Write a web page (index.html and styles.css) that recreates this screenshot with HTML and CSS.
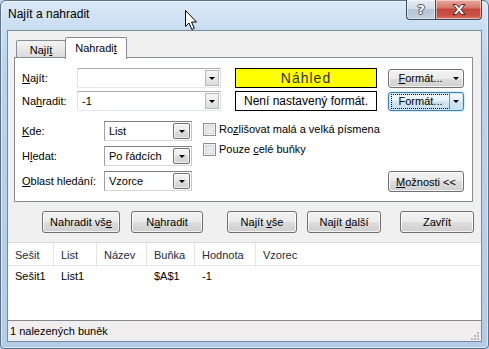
FILE: index.html
```html
<!DOCTYPE html>
<html lang="cs">
<head>
    <meta charset="UTF-8">
    <title>Najít a nahradit</title>

    <link rel="stylesheet" href="styles.css">

</head>
<body>
    <div class="window">
        <!--titulek okna-->
        <div class="titlebar">
            <div class="title">Najít a nahradit</div>
            <div class="caption">
                <span class="cap-btn help">?</span>
                <span class="cap-btn close">
                    <svg width="14" height="11" viewBox="0 0 14 11">
                        <path d="M1 0.5 H4.5 L7 3.5 L9.5 0.5 H13 L9 5.5 L13 10.5 H9.5 L7 7.5 L4.5 10.5 H1 L5 5.5 Z" fill="#fff" stroke="#4a2420" stroke-width="1"/>
                    </svg>
                </span>
            </div>
        </div>

        <div class="client">
            <div class="tabs">
                <span class="tab">Nají<u>t</u></span>
                <span class="tab active">Nahradi<u>t</u></span>
            </div>

            <div class="pane">
                <div class="row">
                    <span class="lbl"><u>N</u>ajít:</span>
                    <div class="combo edit"><span class="val"></span><span class="drop"><i class="tri"></i></span></div>
                    <div class="preview yellow">Náhled</div>
                    <div class="btn split"><span class="face"><u>F</u>ormát...</span><i class="tri"></i></div>
                </div>
                <div class="row second">
                    <span class="lbl">Na<u>h</u>radit:</span>
                    <div class="combo edit"><span class="val">-1</span><span class="drop"><i class="tri"></i></span></div>
                    <div class="preview">Není nastavený formát.</div>
                    <div class="btn split focus"><span class="face">Formát...</span><i class="tri"></i></div>
                </div>

                <div class="lower">
                    <div class="fields">
                        <div class="field">
                            <span class="lbl"><u>K</u>de:</span>
                            <div class="combo list"><span class="val">List</span><span class="drop"><i class="tri"></i></span></div>
                        </div>
                        <div class="field">
                            <span class="lbl">H<u>l</u>edat:</span>
                            <div class="combo list"><span class="val">Po řádcích</span><span class="drop"><i class="tri"></i></span></div>
                        </div>
                        <div class="field">
                            <span class="lbl"><u>O</u>blast hledání:</span>
                            <div class="combo list"><span class="val">Vzorce</span><span class="drop"><i class="tri"></i></span></div>
                        </div>
                    </div>
                    <div class="checks">
                        <label class="check"><span class="box"></span><span>Ro<u>z</u>lišovat malá a velká písmena</span></label>
                        <label class="check"><span class="box"></span><span>Pouze <u>c</u>elé buňky</span></label>
                    </div>
                    <div class="btn more"><span><u>M</u>ožnosti &lt;&lt;</span></div>
                </div>
            </div>

            <div class="actions">
                <div class="btn w-all"><span>Nahradit vš<u>e</u></span></div>
                <div class="btn w-one"><span>N<u>a</u>hradit</span></div>
                <div class="btn w-find"><span>Najít <u>v</u>še</span></div>
                <div class="btn w-next"><span>Najít <u>d</u>alší</span></div>
                <div class="btn w-close"><span>Zavřít</span></div>
            </div>

            <!--výsledky hledání-->
            <div class="results">
                <div class="grid head">
                    <span>Sešit</span>
                    <span>List</span>
                    <span>Název</span>
                    <span>Buňka</span>
                    <span>Hodnota</span>
                    <span>Vzorec</span>
                </div>
                <div class="grid">
                    <span>Sešit1</span>
                    <span>List1</span>
                    <span></span>
                    <span>$A$1</span>
                    <span>-1</span>
                    <span></span>
                </div>
            </div>
            <div class="status">
                <span>1 nalezených buněk</span>
                <svg class="grip" width="11" height="11" viewBox="0 0 11 11">
                    <rect x="8" y="2" width="2" height="2" fill="#b8b8b8"/>
                    <rect x="5" y="5" width="2" height="2" fill="#b8b8b8"/>
                    <rect x="8" y="5" width="2" height="2" fill="#b8b8b8"/>
                    <rect x="2" y="8" width="2" height="2" fill="#b8b8b8"/>
                    <rect x="5" y="8" width="2" height="2" fill="#b8b8b8"/>
                    <rect x="8" y="8" width="2" height="2" fill="#b8b8b8"/>
                </svg>
            </div>
        </div>

        <!--kurzor myši-->
        <svg class="cursor" width="14" height="22" viewBox="0 0 14 22">
            <path d="M1.5 1.5 L1.5 17.5 L5 14 L7.8 20.5 L10.3 19.4 L7.6 13 L12.5 13 Z" fill="#fff" stroke="#000" stroke-width="1" stroke-linejoin="miter"/>
        </svg>
    </div>
</body>
</html>
```

FILE: styles.css
```css
*{
    margin: 0;
    padding: 0;
    box-sizing: border-box;
}
body{
    font-family: "Liberation Sans", Arial, sans-serif;
    font-size: 11px;
    color: #000;
    background: #b9d1ea;
}
u{
    text-decoration: underline;
    text-underline-offset: 1px;
}

/*okno*/
.window{
    width: 489px;
    height: 349px;
    position: relative;
    display: flex;
    flex-direction: column;
    border: 1px solid #5d7189;
    border-radius: 6px 6px 4px 4px;
    background: linear-gradient(to bottom, #dbe8f6 0px, #cadef2 26px, #bcd3ec 70px, #b3cce8 100%);
    box-shadow: inset 0 0 0 1px rgba(255,255,255,0.5);
}
.titlebar{
    height: 29px;
    display: flex;
    align-items: flex-start;
}
.title{
    padding: 6px 0 0 7px;
    font-size: 12px;
    line-height: 15px;
}
.caption{
    margin: -1px 6px 0 auto;
    display: flex;
}
.cap-btn{
    height: 20px;
    display: flex;
    align-items: center;
    justify-content: center;
    border: 1px solid #3d4c60;
    border-top: none;
    box-shadow: inset 0 0 0 1px rgba(255,255,255,0.45);
}
.help{
    width: 29px;
    border-right: none;
    border-radius: 0 0 0 4px;
    background: linear-gradient(to bottom, #e4ebf3 0%, #d3dce7 45%, #b6c4d4 50%, #c3d0de 100%);
    color: #fff;
    font-family: "DejaVu Sans", sans-serif;
    font-weight: bold;
    font-size: 13px;
    text-shadow: 1px 0 0 #445066, -1px 0 0 #445066, 0 1px 0 #445066, 0 -1px 0 #445066;
}
.close{
    width: 47px;
    border-radius: 0 0 4px 0;
    background: linear-gradient(to bottom, #e9aa9e 0%, #d7786b 40%, #c4463a 50%, #cc5446 85%, #dc8170 100%);
}

/*klientská oblast*/
.client{
    flex: 1;
    margin: 0 6px 6px 6px;
    border: 1px solid #7b8898;
    background: #f0f0f0;
    display: flex;
    flex-direction: column;
}
.tabs{
    display: flex;
    align-items: flex-end;
    height: 21px;
    margin: 6px 0 0 8px;
}
.tab{
    height: 18px;
    width: 50px;
    border: 1px solid #898c95;
    border-bottom: none;
    border-radius: 2px 2px 0 0;
    background: linear-gradient(to bottom, #f4f4f4, #d9d9d9);
    text-align: center;
    line-height: 17px;
    padding-top: 1px;
}
.tab.active{
    width: 62px;
    margin-left: -1px;
    background: #fff;
    position: relative;
    z-index: 1;
    margin-bottom: -1px;
    height: 22px;
    line-height: 18px;
}
.pane{
    height: 145px;
    margin: -1px 0 0 6px;
    width: 459px;
    border: 1px solid #898c95;
    background: #fff;
    padding: 10px 8px 0 7px;
}
.row{
    display: flex;
    align-items: center;
    height: 20px;
}
.row.second{
    margin-top: 3px;
}
.lbl{
    width: 55px;
}

/*rozbalovací seznamy*/
.combo{
    height: 20px;
    display: flex;
    border: 1px solid #abadb3;
    border-color: #abadb3 #dbdfe6 #e3e9ef #e2e3ea;
    background: #fff;
}
.combo .val{
    flex: 1;
    padding-left: 4px;
    line-height: 18px;
}
.combo .drop{
    width: 14px;
    margin: 1px;
    display: flex;
    align-items: center;
    justify-content: center;
    border: 1px solid #b9b9b9;
    background: linear-gradient(to bottom, #f6f6f6, #dcdcdc);
}
.combo.edit{
    width: 144px;
}
.combo.list{
    width: 88px;
    border-color: #7f7f7f #c6c6c6 #d7d7d7 #a0a0a0;
}
.combo.list .drop{
    width: 17px;
    border-color: #707070;
    border-radius: 2px;
    background: linear-gradient(to bottom, #f3f3f3 0%, #ebebeb 50%, #dddddd 50%, #cfcfcf 100%);
    box-shadow: inset 0 0 0 1px rgba(255,255,255,0.7);
}
.tri{
    display: inline-block;
    width: 0;
    height: 0;
    border-left: 3px solid transparent;
    border-right: 3px solid transparent;
    border-top: 3px solid #000;
}

.preview{
    width: 142px;
    height: 20px;
    margin-left: 14px;
    border: 1px solid #000;
    text-align: center;
    line-height: 18px;
    font-size: 12px;
}
.preview.yellow{
    background: #ffff00;
    color: #303010;
    font-size: 14px;
    letter-spacing: 1px;
}

/*tlačítka*/
.btn{
    height: 22px;
    border: 1px solid #707070;
    border-radius: 3px;
    background: linear-gradient(to bottom, #f2f2f2 0%, #ebebeb 50%, #dddddd 50%, #cfcfcf 100%);
    box-shadow: inset 0 0 0 1px rgba(255,255,255,0.75);
    display: flex;
    align-items: center;
    justify-content: center;
}
.btn.split{
    width: 76px;
    height: 19px;
    margin-left: 11px;
    justify-content: flex-start;
    padding-right: 4px;
}
.btn.split .face{
    flex: 1;
    text-align: center;
    line-height: 13px;
    border: 1px dotted transparent;
    margin: 2px 3px 2px 2px;
}
.btn.focus{
    border-color: #3c7fb1;
    background: linear-gradient(to bottom, #f4f9fc 0%, #e3f0f8 50%, #d2e6f3 50%, #c6def0 100%);
    box-shadow: 0 0 2px #79b9e6, inset 0 0 0 1px #c9e7fb;
}
.btn.focus .face{
    border-color: #000;
    border-right: 1px solid #7b96b2;
}

.lower{
    display: flex;
    margin-top: 10px;
}
.fields{
    width: 170px;
    display: flex;
    flex-direction: column;
    gap: 5px;
}
.field{
    display: flex;
    align-items: center;
}
.field .lbl{
    width: 82px;
}
.checks{
    width: 185px;
    margin-left: 11px;
    padding-top: 2px;
    display: flex;
    flex-direction: column;
    gap: 7px;
}
.check{
    display: flex;
    align-items: center;
    height: 13px;
    line-height: 13px;
}
.check .box{
    width: 13px;
    height: 13px;
    margin-right: 3px;
    border: 1px solid #8e8f8f;
    background: linear-gradient(135deg, #dcdcdc, #f6f6f6);
    box-shadow: inset 0 0 0 1px #f4f4f4, inset 0 0 0 2px #d8d8d8;
}
.btn.more{
    width: 76px;
    height: 21px;
    align-self: flex-end;
    margin-bottom: -1px;
}

.actions{
    display: flex;
    margin: 9px 0 0 34px;
}
.w-all{ width: 78px; }
.w-one{ width: 72px; margin-left: 11px; }
.w-find{ width: 70px; margin-left: 24px; }
.w-next{ width: 74px; margin-left: 10px; }
.w-close{ width: 74px; margin-left: 19px; }

/*seznam výsledků*/
.results{
    flex: 1;
    margin-top: 9px;
    background: #fff;
    border-top: 1px solid #d9d9d9;
    border-bottom: 1px solid #82878f;
}
.grid{
    display: grid;
    grid-template-columns: 46px 43px 50px 48px 61px 1fr;
    height: 20px;
    line-height: 20px;
}
.grid span{
    padding-left: 7px;
}
.grid.head{
    height: 23px;
    line-height: 24px;
    border-bottom: 1px solid #e5e5e5;
    color: #1e2b3c;
}
.grid.head span{
    border-right: 1px solid #e5e5e5;
}
.grid.head span:last-child{
    border-right: none;
}
.status{
    height: 20px;
    display: flex;
    align-items: center;
    justify-content: space-between;
    padding-left: 2px;
    background: #f0eeee;
}
.grip{
    align-self: flex-end;
    margin-right: 1px;
}

.cursor{
    position: absolute;
    left: 183px;
    top: 8px;
}
```
